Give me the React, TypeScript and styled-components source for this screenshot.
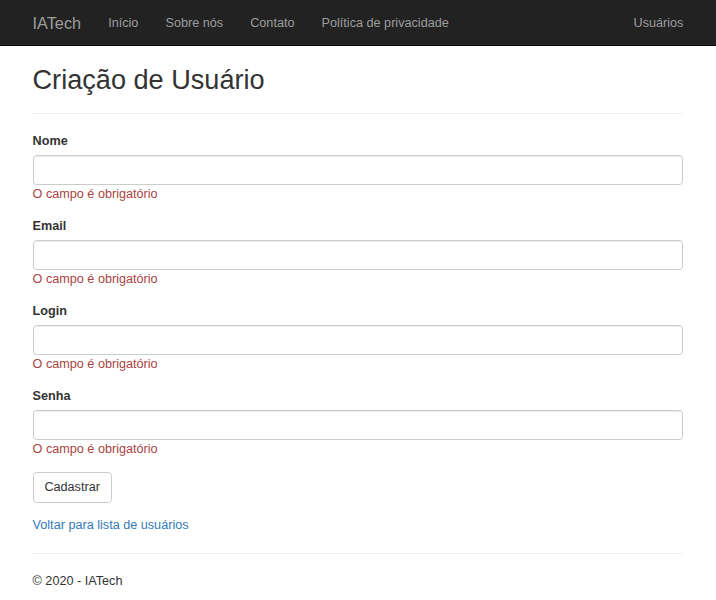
import React from "react";
import styled, { createGlobalStyle } from "styled-components";

const GlobalStyle = createGlobalStyle`
  html, body {
    margin: 0;
    padding: 0;
    background: #fff;
  }
  body {
    font-family: "Liberation Sans", Arial, Helvetica, sans-serif;
    font-size: 14px;
    line-height: 1.42857143;
    color: #333;
  }
  * { box-sizing: border-box; }
`;

const Page = styled.div`
  zoom: 0.904;
  padding-bottom: 20px;
`;

const Navbar = styled.nav`
  background: #222;
  border-bottom: 1px solid #080808;
  min-height: 50px;
`;

const Container = styled.div`
  width: 750px;
  margin: 0 auto;
  padding: 0 15px;
`;

const NavInner = styled(Container)`
  display: flex;
  align-items: center;
  height: 50px;
`;

const Brand = styled.a`
  display: block;
  margin-left: -15px;
  padding: 15px;
  font-size: 18px;
  line-height: 20px;
  color: #9d9d9d;
  text-decoration: none;
`;

const NavList = styled.ul<{ $right?: boolean }>`
  display: flex;
  list-style: none;
  margin: 0;
  padding: 0;
  margin-left: ${(p) => (p.$right ? "auto" : "0")};
  margin-right: ${(p) => (p.$right ? "-15px" : "0")};
`;

const NavLink = styled.a`
  display: block;
  padding: 15px;
  line-height: 20px;
  font-size: 14px;
  color: #9d9d9d;
  text-decoration: none;
`;

const Content = styled(Container)`
  padding-top: 1px;
`;

const Title = styled.h2`
  margin: 20px 0 10px;
  font-size: 30px;
  font-weight: 500;
  line-height: 1.1;
  color: #333;
`;

const Rule = styled.hr`
  margin: 20px 0;
  border: 0;
  border-top: 1px solid #eee;
  height: 0;
`;

const FormGroup = styled.div`
  margin-bottom: 15px;
`;

const Label = styled.label`
  display: inline-block;
  max-width: 100%;
  margin-bottom: 5px;
  font-weight: 700;
`;

const Input = styled.input`
  display: block;
  width: 100%;
  height: 34px;
  padding: 6px 12px;
  font-family: inherit;
  font-size: 14px;
  line-height: 1.42857143;
  color: #555;
  background: #fff;
  border: 1px solid #ccc;
  border-radius: 4px;
  box-shadow: inset 0 1px 1px rgba(0, 0, 0, 0.075);
  outline: none;
`;

const ErrorText = styled.span`
  color: #a94442;
`;

const Button = styled.button`
  display: inline-block;
  padding: 6px 12px;
  font-family: inherit;
  font-size: 14px;
  line-height: 1.42857143;
  color: #333;
  background: #fff;
  border: 1px solid #ccc;
  border-radius: 4px;
  cursor: pointer;
`;

const BackLink = styled.a`
  color: #337ab7;
  text-decoration: none;
`;

const FooterText = styled.p`
  margin: 0 0 10px;
`;

const fields = ["Nome", "Email", "Login", "Senha"];

export default function App() {
  return (
    <Page>
      <GlobalStyle />
      <Navbar>
        <NavInner>
          <Brand href="#">IATech</Brand>
          <NavList>
            <li><NavLink href="#">Início</NavLink></li>
            <li><NavLink href="#">Sobre nós</NavLink></li>
            <li><NavLink href="#">Contato</NavLink></li>
            <li><NavLink href="#">Política de privacidade</NavLink></li>
          </NavList>
          <NavList $right>
            <li><NavLink href="#">Usuários</NavLink></li>
          </NavList>
        </NavInner>
      </Navbar>
      <Content>
        <Title>Criação de Usuário</Title>
        <Rule />
        <form onSubmit={(e) => e.preventDefault()}>
          {fields.map((f) => (
            <FormGroup key={f}>
              <Label>{f}</Label>
              <Input type={f === "Senha" ? "password" : "text"} />
              <ErrorText>O campo é obrigatório</ErrorText>
            </FormGroup>
          ))}
          <FormGroup>
            <Button type="submit">Cadastrar</Button>
          </FormGroup>
        </form>
        <div>
          <BackLink href="#">Voltar para lista de usuários</BackLink>
        </div>
        <Rule />
        <footer>
          <FooterText>© 2020 - IATech</FooterText>
        </footer>
      </Content>
    </Page>
  );
}
